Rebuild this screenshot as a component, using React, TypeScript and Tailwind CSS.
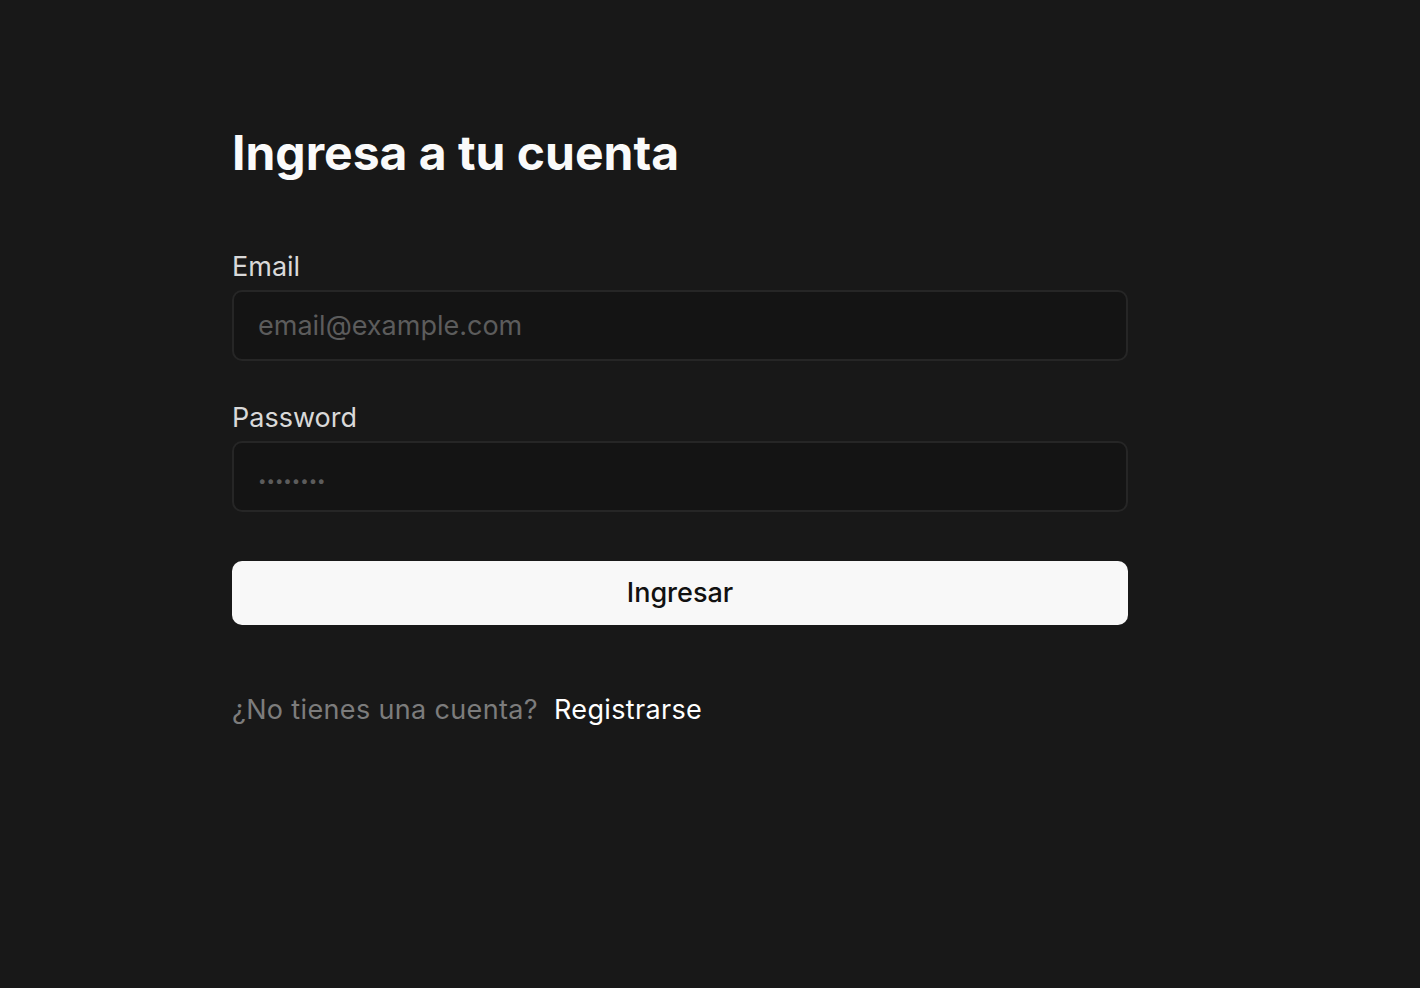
import { useState } from 'react';

function Field({
  label,
  type,
  placeholder,
  small,
}: {
  label: string;
  type: string;
  placeholder: string;
  small?: boolean;
}) {
  const [value, setValue] = useState('');
  return (
    <label className="flex flex-col gap-[7px]">
      <span className="text-[27px] leading-[32px] text-[#d9d9d9]">{label}</span>
      <input
        type={type}
        value={value}
        onChange={(e) => setValue(e.target.value)}
        placeholder={placeholder}
        className={
          small
            ? 'h-[71px] w-full rounded-[10px] border-2 border-[#262626] bg-[#141414] px-[24px] text-[27px] text-white outline-none placeholder:text-[15px] placeholder:text-[#5c5c5c]'
            : 'h-[71px] w-full rounded-[10px] border-2 border-[#262626] bg-[#141414] px-[24px] text-[27px] text-white outline-none placeholder:text-[#5c5c5c]'
        }
      />
    </label>
  );
}

export default function App() {
  return (
    <div className="min-h-screen bg-[#181818] font-['Inter',sans-serif]">
      <div className="ml-[232px] w-[896px] pt-[124px]">
        <h1 className="text-[48px] font-bold leading-[58px] text-[#fafafa]">Ingresa a tu cuenta</h1>

        <form className="mt-[69px] flex flex-col" onSubmit={(e) => e.preventDefault()}>
          <div className="flex flex-col gap-[41px]">
            <Field label="Email" type="email" placeholder="email@example.com" />
            <Field label="Password" type="password" placeholder="••••••••" small />
          </div>
          <button
            type="submit"
            className="mt-[49px] h-[64px] w-full rounded-[10px] bg-[#f8f8f8] text-[27px] font-medium text-[#111]"
          >
            Ingresar
          </button>
        </form>

        <p className="mt-[69px] flex gap-[16px] text-[27px] leading-[32px] tracking-[0.35px]">
          <span className="text-[#7c7c7c]">¿No tienes una cuenta?</span>
          <a href="#" className="text-white">Registrarse</a>
        </p>
      </div>
    </div>
  );
}
